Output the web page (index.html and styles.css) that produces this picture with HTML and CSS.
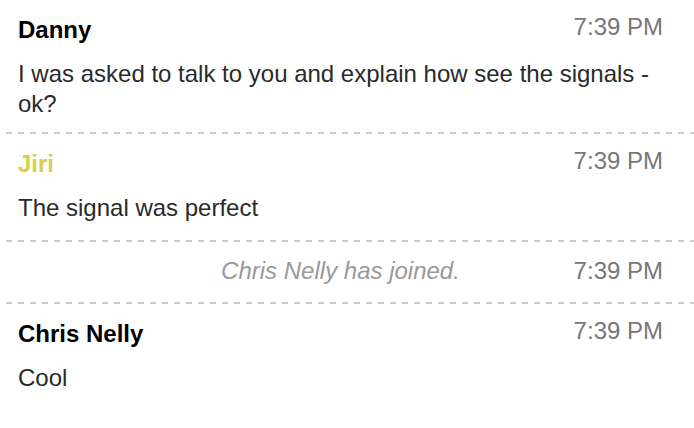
FILE: index.html
```html
<!DOCTYPE html>
<html lang="en">
<head>
    <meta charset="UTF-8">
    <meta name="viewport" content="width=device-width, initial-scale=1.0">
    <title>Chat</title>
    <link rel="stylesheet" href="styles.css">
</head>
<body>

<div class="chat">
    <div class="msg">
        <div class="msg-head">
            <span class="author">Danny</span>
            <span class="time">7:39 PM</span>
        </div>
        <div class="text">I was asked to talk to you and explain how see the signals - ok?</div>
    </div>

    <div class="msg">
        <div class="msg-head">
            <span class="author author-jiri">Jiri</span>
            <span class="time">7:39 PM</span>
        </div>
        <div class="text">The signal was perfect</div>
    </div>

    <!-- system notice -->
    <div class="msg notice">
        <span class="notice-text">Chris Nelly has joined.</span>
        <span class="time">7:39 PM</span>
    </div>

    <div class="msg">
        <div class="msg-head">
            <span class="author">Chris Nelly</span>
            <span class="time">7:39 PM</span>
        </div>
        <div class="text">Cool</div>
    </div>
</div>

</body>
</html>
```

FILE: styles.css
```css
body {
    margin: 0;
    font-family: "Liberation Sans", Arial, sans-serif;
    background: #ffffff;
}
.chat {
    width: 694px;
}
.msg {
    padding: 17px 31px 17px 18px;
    font-size: 24px;
    line-height: 30px;
    background-image: repeating-linear-gradient(90deg, #cccccc 0 6px, transparent 6px 12px);
    background-size: 100% 2px;
    background-position: 6px 0;
    background-repeat: no-repeat;
}
.msg:first-child {
    background: none;
    padding-top: 15px;
    padding-bottom: 13px;
}
.msg-head {
    display: flex;
    justify-content: space-between;
    align-items: flex-start;
}
.author {
    font-weight: bold;
    color: #000000;
}
.author-jiri {
    color: #d8d04a;
}
.time {
    color: #777777;
    margin-top: -3px;
}
.text {
    margin-top: 14px;
    color: #2a2a2a;
}
.notice {
    display: grid;
    padding-top: 16px;
    padding-bottom: 16px;
}
.notice > span {
    grid-area: 1 / 1;
}
.notice-text {
    justify-self: center;
    font-style: italic;
    color: #999999;
}
.notice .time {
    justify-self: end;
    margin-top: 0;
}
```
